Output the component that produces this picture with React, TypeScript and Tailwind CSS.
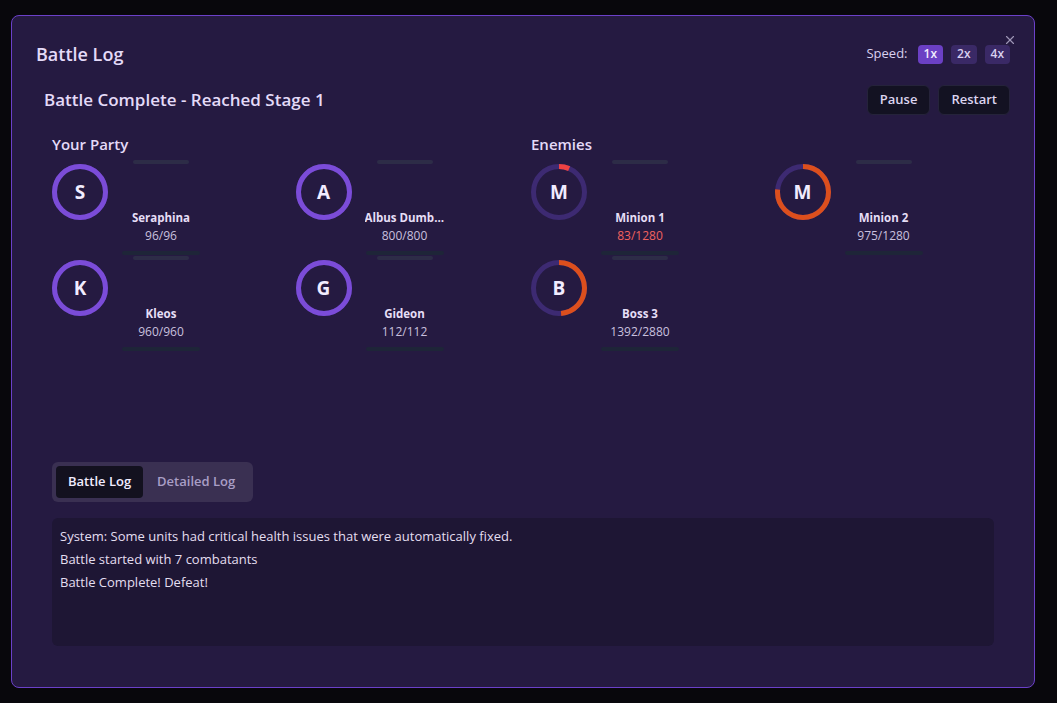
import { X } from 'lucide-react';

type Unit = {
    letter: string;
    name: string;
    hp: number;
    max: number;
    enemy?: boolean;
};

const party: Unit[] = [
    { letter: 'S', name: 'Seraphina', hp: 96, max: 96 },
    { letter: 'A', name: 'Albus Dumbledore', hp: 800, max: 800 },
    { letter: 'K', name: 'Kleos', hp: 960, max: 960 },
    { letter: 'G', name: 'Gideon', hp: 112, max: 112 },
];

const enemies: Unit[] = [
    { letter: 'M', name: 'Minion 1', hp: 83, max: 1280, enemy: true },
    { letter: 'M', name: 'Minion 2', hp: 975, max: 1280, enemy: true },
    { letter: 'B', name: 'Boss 3', hp: 1392, max: 2880, enemy: true },
];

const logLines = [
    'System: Some units had critical health issues that were automatically fixed.',
    'Battle started with 7 combatants',
    'Battle Complete! Defeat!',
];

const HealthRing = ({ unit }: { unit: Unit }) => {
    const r = 25.5;
    const c = 2 * Math.PI * r;
    const pct = unit.hp / unit.max;
    const low = pct < 0.25;
    const color = unit.enemy ? (low ? '#ee4242' : '#dc4f1d') : '#7b4cd8';
    return (
        <div className="relative w-14 h-14 mt-1 shrink-0">
            <svg width="56" height="56" viewBox="0 0 56 56" className="absolute inset-0">
                <circle cx="28" cy="28" r={r} fill="none" stroke="#3d2a72" strokeWidth="5" />
                <circle
                    cx="28"
                    cy="28"
                    r={r}
                    fill="none"
                    stroke={color}
                    strokeWidth="5"
                    strokeDasharray={`${c * pct} ${c}`}
                    transform="rotate(-90 28 28)"
                />
            </svg>
            <div className="absolute inset-0 flex items-center justify-center text-[19px] font-bold text-[#f1ecff]">
                {unit.letter}
            </div>
        </div>
    );
};

const UnitCard = ({ unit }: { unit: Unit }) => {
    const low = unit.hp / unit.max < 0.25;
    return (
        <div className="flex items-start gap-[13px] h-[91px]">
            <HealthRing unit={unit} />
            <div className="flex flex-col items-center w-20">
                <div className="w-14 h-1 rounded-full bg-[#2d2c47]" />
                <div className="mt-[45px] w-20 truncate text-center text-[11.5px] font-bold leading-[18px] text-[#e6def6]">
                    {unit.name}
                </div>
                <div className={`text-xs leading-[18px] ${low ? 'text-[#f0625f]' : 'text-[#c9c0df]'}`}>
                    {unit.hp}/{unit.max}
                </div>
                <div className="mt-[6px] w-[78px] h-1 rounded-full bg-[#1e2538]" />
            </div>
        </div>
    );
};

const Section = ({ title, units }: { title: string; units: Unit[] }) => (
    <div>
        <h3 className="text-[15px] font-semibold leading-5 text-[#e4daf8]">{title}</h3>
        <div className="mt-[6px] grid grid-cols-2 gap-x-6 gap-y-[5px]">
            {units.map((u, i) => (
                <UnitCard key={i} unit={u} />
            ))}
        </div>
    </div>
);

export default function App() {
    return (
        <div
            className="w-full h-[703px] bg-[#08070c] pt-[15px] pl-[11px]"
            style={{ fontFamily: '"Open Sans", "Noto Sans", sans-serif' }}
        >
            <div className="relative w-[1024px] h-[673px] rounded-lg border border-[#6b40c9] bg-[#251a41] px-6 pt-6">
                <X className="absolute right-[17px] top-[17px] w-[14px] h-[14px] text-[#9d95b5]" />

                <div className="flex items-center justify-between h-7">
                    <h2 className="text-[18px] font-semibold text-[#e4daf8]">Battle Log</h2>
                    <div className="flex items-center gap-2">
                        <span className="text-[13px] text-[#d9d0ef] mr-0.5">Speed:</span>
                        <button className="h-[19px] px-[6px] rounded text-xs font-semibold bg-[#6b40c4] text-[#f1ecff]">1x</button>
                        <button className="h-[19px] px-[6px] rounded text-xs font-semibold bg-[#3a2966] text-[#d9d0ef]">2x</button>
                        <button className="h-[19px] px-[6px] rounded text-xs font-semibold bg-[#3a2966] text-[#d9d0ef]">4x</button>
                    </div>
                </div>

                <div className="mt-[17px] flex items-center justify-between pl-2">
                    <h3 className="text-[17px] font-semibold text-[#e4daf8]">Battle Complete - Reached Stage 1</h3>
                    <div className="flex gap-2">
                        <button className="h-[30px] px-3 rounded-md border border-[#25233a] bg-[#131222] text-[13px] font-semibold text-[#dcd4ef]">
                            Pause
                        </button>
                        <button className="h-[30px] px-3 rounded-md border border-[#25233a] bg-[#131222] text-[13px] font-semibold text-[#dcd4ef]">
                            Restart
                        </button>
                    </div>
                </div>

                <div className="px-4">
                    <div className="mt-[19px] grid grid-cols-2 gap-4">
                        <Section title="Your Party" units={party} />
                        <Section title="Enemies" units={enemies} />
                    </div>

                    <div className="mt-[115px] inline-flex p-1 rounded-md bg-[#3a3052]">
                        <button className="h-8 px-3 rounded bg-[#13111f] text-[13px] font-semibold text-[#f1ecff]">
                            Battle Log
                        </button>
                        <button className="h-8 px-[14px] text-[13px] font-semibold text-[#a99ec6]">Detailed Log</button>
                    </div>

                    <div className="mt-4 h-32 rounded-md bg-[#1e1634] px-2 pt-2 space-y-[3px]">
                        {logLines.map((line, i) => (
                            <div key={i} className="text-[13px] leading-5 text-[#e4def0]">
                                {line}
                            </div>
                        ))}
                    </div>
                </div>
            </div>
        </div>
    );
}
